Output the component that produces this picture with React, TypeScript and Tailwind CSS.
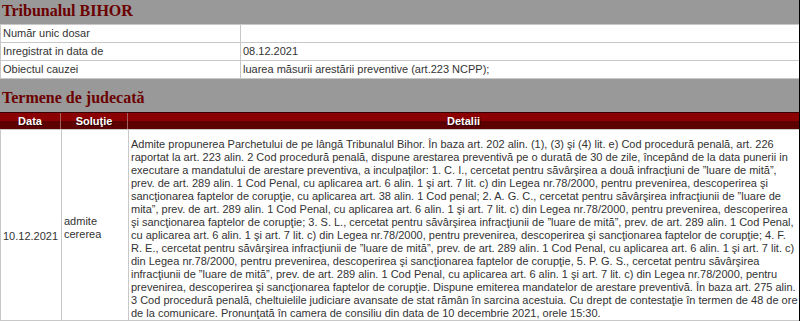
const info = [
  ["Număr unic dosar", ""],
  ["Inregistrat in data de", "08.12.2021"],
  ["Obiectul cauzei", "luarea măsurii arestării preventive (art.223 NCPP);"],
];

const detalii = [
  "Admite propunerea Parchetului de pe lângă Tribunalul Bihor. În baza art. 202 alin. (1), (3) şi (4) lit. e) Cod procedură penală, art. 226",
  "raportat la art. 223 alin. 2 Cod procedură penală, dispune arestarea preventivă pe o durată de 30 de zile, începând de la data punerii in",
  "executare a mandatului de arestare preventiva, a inculpaţilor: 1. C. I., cercetat pentru săvârşirea a două infracţiuni de \u201Dluare de mită\u201D,",
  "prev. de art. 289 alin. 1 Cod Penal, cu aplicarea art. 6 alin. 1 şi art. 7 lit. c) din Legea nr.78/2000, pentru prevenirea, descoperirea şi",
  "sancţionarea faptelor de corupţie, cu aplicarea art. 38 alin. 1 Cod penal; 2. A. G. C., cercetat pentru săvârşirea infracţiunii de \u201Dluare de",
  "mita\u201D, prev. de art. 289 alin. 1 Cod Penal, cu aplicarea art. 6 alin. 1 şi art. 7 lit. c) din Legea nr.78/2000, pentru prevenirea, descoperirea",
  "şi sancţionarea faptelor de corupţie; 3. S. L., cercetat pentru săvârşirea infracţiunii de \u201Dluare de mită\u201D, prev. de art. 289 alin. 1 Cod Penal,",
  "cu aplicarea art. 6 alin. 1 şi art. 7 lit. c) din Legea nr.78/2000, pentru prevenirea, descoperirea şi sancţionarea faptelor de corupţie; 4. F.",
  "R. E., cercetat pentru săvârşirea infracţiunii de \u201Dluare de mită\u201D, prev. de art. 289 alin. 1 Cod Penal, cu aplicarea art. 6 alin. 1 şi art. 7 lit. c)",
  "din Legea nr.78/2000, pentru prevenirea, descoperirea şi sancţionarea faptelor de corupţie, 5. P. G. S., cercetat pentru săvârşirea",
  "infracţiunii de \u201Dluare de mită\u201D, prev. de art. 289 alin. 1 Cod Penal, cu aplicarea art. 6 alin. 1 şi art. 7 lit. c) din Legea nr.78/2000, pentru",
  "prevenirea, descoperirea şi sancţionarea faptelor de corupţie. Dispune emiterea mandatelor de arestare preventivă. În baza art. 275 alin.",
  "3 Cod procedură penală, cheltuielile judiciare avansate de stat rămân în sarcina acestuia. Cu drept de contestaţie în termen de 48 de ore",
  "de la comunicare. Pronunţată în camera de consiliu din data de 10 decembrie 2021, orele 15:30.",
];

const sans = "font-['Liberation_Sans',Arial,sans-serif]";
const serif = "font-['Liberation_Serif','Times_New_Roman',serif]";

export default function App() {
  return (
    <div className="h-[321px] w-[802px] overflow-hidden bg-white">
      <div className="flex h-full w-[800px] flex-col border-r border-black bg-[#999999]">
        <h1 className={`${serif} h-[24px] shrink-0 pl-[2px] pt-[1px] text-[16px] font-bold leading-[20px] text-[#6b0000]`}>
          Tribunalul BIHOR
        </h1>

        <div className={`${sans} shrink-0 border-l border-t border-[#c8c8c8] text-[11px] leading-[13px] text-[#333]`}>
          {info.map(([k, v]) => (
            <div key={k} className="grid h-[18px] grid-cols-[240px_1fr] border-b border-[#c8c8c8] bg-white">
              <div className="border-r border-[#c8c8c8] px-[2px] pt-[2px]">{k}</div>
              <div className="px-[2px] pt-[2px]">{v}</div>
            </div>
          ))}
        </div>

        <h2 className={`${serif} h-[33px] shrink-0 pl-[2px] pt-[9px] text-[16px] font-bold leading-[20px] text-[#6b0000]`}>
          Termene de judecată
        </h2>

        <div className={`${sans} shrink-0 text-[11px] text-[#333]`}>
          <div className="grid h-[17px] grid-cols-[61px_67px_1fr] border-t border-[#3a0000] bg-[linear-gradient(#8b0000_0,#8b0000_50%,#5c0000_50%,#5c0000_100%)] text-center font-bold leading-[16px] text-white [text-shadow:1px_1px_0_#300]">
            <div className="border-r border-[#a06060]">Data</div>
            <div className="border-r border-[#a06060]">Soluţie</div>
            <div>Detalii</div>
          </div>
          <div className="grid h-[192px] grid-cols-[61px_67px_1fr] border-b border-l border-t border-[#c8c8c8] bg-white leading-[13px]">
            <div className="flex items-center border-r border-[#c8c8c8] pl-[2px] pt-[23px]">10.12.2021</div>
            <div className="flex items-center border-r border-[#c8c8c8] pl-[2px] pt-[6px]">
              <div>
                admite
                <br />
                cererea
              </div>
            </div>
            <div className="px-[2px] pt-[8px]">
              {detalii.map((l, i) => (
                <div key={i} className="whitespace-nowrap">
                  {l}
                </div>
              ))}
            </div>
          </div>
        </div>
      </div>
    </div>
  );
}
